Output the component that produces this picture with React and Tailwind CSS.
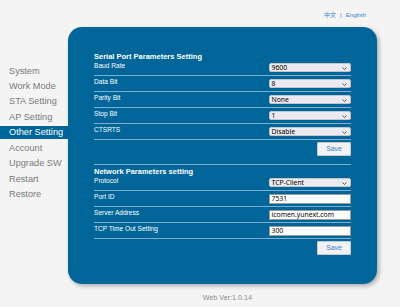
import React from "react";

const Chevron = () => (
  <svg width="5" height="3" viewBox="0 0 5 3" className="absolute right-[3px] top-[3px]">
    <path d="M0.5 0.5 L2.5 2.5 L4.5 0.5" fill="none" stroke="#444" strokeWidth="0.9" />
  </svg>
);

const Select = ({ value }) => (
  <div className="relative mt-[3px] w-[82px] h-[9px] bg-[#ebebef] border border-[#c4c4cc] rounded-[2px] pl-[1.5px] text-[6.8px] leading-[7px] text-black font-['Noto_Sans',sans-serif]">
    {value}
    <Chevron />
  </div>
);

const Input = ({ value }) => (
  <div className="mt-[3px] w-[82px] h-[9.5px] bg-white border border-[#9a9a9a] pl-[1.5px] text-[6.8px] leading-[7.5px] text-black font-['Noto_Sans',sans-serif]">
    {value}
  </div>
);

const Row = ({ label, children }) => (
  <div className="flex justify-between items-start h-[16px] border-b border-[#7fb0cf]">
    <div className="mt-[2px] text-[6.6px] leading-[8px] text-white">{label}</div>
    {children}
  </div>
);

const SaveBtn = () => (
  <div className="flex justify-end mt-[2px]">
    <div className="w-[34px] h-[14px] bg-[#f2f2f4] border border-[#c8c8d0] rounded-[1px] flex items-center justify-center text-[6.9px] text-[#3a7fc4]">
      Save
    </div>
  </div>
);

export default function App() {
  const menu = [
    "System",
    "Work Mode",
    "STA Setting",
    "AP Setting",
    "Other Setting",
    "Account",
    "Upgrade SW",
    "Restart",
    "Restore",
  ];
  return (
    <div className="w-[400px] h-[307px] bg-[#f4f4f4] flex flex-col font-['Liberation_Sans',Arial,sans-serif] overflow-hidden">
      <div className="h-[27px] flex justify-end items-start pt-[11px] pr-[34px] text-[6.2px] leading-[8px] text-[#3b87cc]">
        <span className="font-['Noto_Sans_CJK_SC',sans-serif] text-[6px]">中文</span>
        <span className="mx-[4px]">|</span>
        <span>English</span>
      </div>
      <div className="flex">
        <nav className="w-[68px] pt-[37.5px] flex flex-col gap-[2.45px]">
          {menu.map((m) => (
            <div
              key={m}
              className={
                "h-[13px] leading-[13px] pl-[9px] text-[9.2px] " +
                (m === "Other Setting" ? "bg-[#00669a] text-white" : "text-[#7a7a7a]")
              }
            >
              {m}
            </div>
          ))}
        </nav>
        <div className="w-[309px] h-[257px] rounded-[14px] bg-[#00669a] px-[26px] pt-[26px] shadow-[2px_2px_4px_rgba(0,0,0,0.3)]">
          <div className="text-[7.5px] leading-[8px] font-bold text-white mb-[-1px]">
            Serial Port Parameters Setting
          </div>
          <Row label="Baud Rate"><Select value="9600" /></Row>
          <Row label="Data Bit"><Select value="8" /></Row>
          <Row label="Parity Bit"><Select value="None" /></Row>
          <Row label="Stop Bit"><Select value="1" /></Row>
          <Row label="CTSRTS"><Select value="Disable" /></Row>
          <SaveBtn />
          <div className="mt-[8px] border-t border-[#7fb0cf]" />
          <div className="mt-[3px] text-[7.5px] leading-[8px] font-bold text-white mb-[-1px]">
            Network Parameters setting
          </div>
          <Row label="Protocol"><Select value="TCP-Client" /></Row>
          <Row label="Port ID"><Input value="7531" /></Row>
          <Row label="Server Address"><Input value="icomen.yunext.com" /></Row>
          <Row label="TCP Time Out Setting"><Input value="300" /></Row>
          <SaveBtn />
        </div>
      </div>
      <div className="pt-[9.5px] pl-[202.7px] text-[7.2px] leading-[8px] text-[#8a8a8a]">
        Web Ver:1.0.14
      </div>
    </div>
  );
}
